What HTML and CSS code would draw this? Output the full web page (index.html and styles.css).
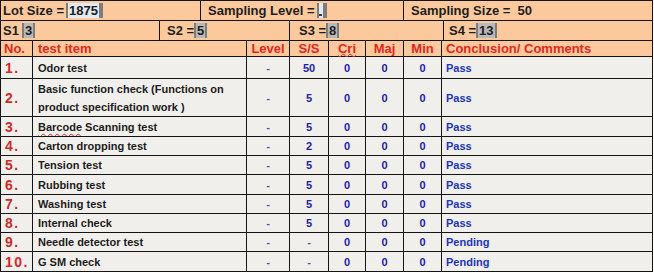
FILE: index.html
```html
<!DOCTYPE html>
<html lang="en">
<head>
<meta charset="utf-8">
<title>Sampling inspection</title>
<link rel="stylesheet" href="styles.css">
</head>
<body>
<div class="sheet">
  <div class="band band-1">
    <div class="cell info pad-a">Lot Size =<span class="fld fld-light">1875</span></div>
    <div class="cell info pad-b">Sampling Level =<span class="fld fld-light fld-empty"><span class="dash"></span></span></div>
    <div class="cell info pad-b">Sampling Size = &nbsp;50</div>
  </div>
  <div class="band band-2">
    <div class="cell info pad-a">S1<span class="fld fld-gap">3</span></div>
    <div class="cell info pad-c">S2 =<span class="fld">5</span></div>
    <div class="cell info pad-d">S3 =<span class="fld">8</span></div>
    <div class="cell info pad-e">S4 =<span class="fld">13</span></div>
  </div>
  <div class="table">
    <div class="cell head num">No.</div>
    <div class="cell head item">test item</div>
    <div class="cell head mid">Level</div>
    <div class="cell head mid">S/S</div>
    <div class="cell head mid"><span class="spell spell-head">Cri</span></div>
    <div class="cell head mid">Maj</div>
    <div class="cell head mid">Min</div>
    <div class="cell head note">Conclusion/ Comments</div>

    <div class="cell data no">1.</div>
    <div class="cell data item">Odor test</div>
    <div class="cell data mid val lvl">-</div>
    <div class="cell data mid val">50</div>
    <div class="cell data mid val">0</div>
    <div class="cell data mid val">0</div>
    <div class="cell data mid val">0</div>
    <div class="cell data note res">Pass</div>

    <div class="cell data no">2.</div>
    <div class="cell data item wrap">Basic function check (Functions on product specification work )</div>
    <div class="cell data mid val lvl">-</div>
    <div class="cell data mid val">5</div>
    <div class="cell data mid val">0</div>
    <div class="cell data mid val">0</div>
    <div class="cell data mid val">0</div>
    <div class="cell data note res">Pass</div>

    <div class="cell data no">3.</div>
    <div class="cell data item"><span class="spell">Barcode</span>&nbsp;Scanning test</div>
    <div class="cell data mid val lvl">-</div>
    <div class="cell data mid val">5</div>
    <div class="cell data mid val">0</div>
    <div class="cell data mid val">0</div>
    <div class="cell data mid val">0</div>
    <div class="cell data note res">Pass</div>

    <div class="cell data no">4.</div>
    <div class="cell data item">Carton dropping test</div>
    <div class="cell data mid val lvl">-</div>
    <div class="cell data mid val">2</div>
    <div class="cell data mid val">0</div>
    <div class="cell data mid val">0</div>
    <div class="cell data mid val">0</div>
    <div class="cell data note res">Pass</div>

    <div class="cell data no">5.</div>
    <div class="cell data item">Tension test</div>
    <div class="cell data mid val lvl">-</div>
    <div class="cell data mid val">5</div>
    <div class="cell data mid val">0</div>
    <div class="cell data mid val">0</div>
    <div class="cell data mid val">0</div>
    <div class="cell data note res">Pass</div>

    <div class="cell data no">6.</div>
    <div class="cell data item">Rubbing test</div>
    <div class="cell data mid val lvl">-</div>
    <div class="cell data mid val">5</div>
    <div class="cell data mid val">0</div>
    <div class="cell data mid val">0</div>
    <div class="cell data mid val">0</div>
    <div class="cell data note res">Pass</div>

    <div class="cell data no">7.</div>
    <div class="cell data item">Washing test</div>
    <div class="cell data mid val lvl">-</div>
    <div class="cell data mid val">5</div>
    <div class="cell data mid val">0</div>
    <div class="cell data mid val">0</div>
    <div class="cell data mid val">0</div>
    <div class="cell data note res">Pass</div>

    <div class="cell data no">8.</div>
    <div class="cell data item">Internal check</div>
    <div class="cell data mid val lvl">-</div>
    <div class="cell data mid val">5</div>
    <div class="cell data mid val">0</div>
    <div class="cell data mid val">0</div>
    <div class="cell data mid val">0</div>
    <div class="cell data note res">Pass</div>

    <div class="cell data no">9.</div>
    <div class="cell data item">Needle detector test</div>
    <div class="cell data mid val lvl">-</div>
    <div class="cell data mid val lvl">-</div>
    <div class="cell data mid val">0</div>
    <div class="cell data mid val">0</div>
    <div class="cell data mid val">0</div>
    <div class="cell data note res">Pending</div>

    <div class="cell data no">10.</div>
    <div class="cell data item">G SM check</div>
    <div class="cell data mid val lvl">-</div>
    <div class="cell data mid val lvl">-</div>
    <div class="cell data mid val">0</div>
    <div class="cell data mid val">0</div>
    <div class="cell data mid val">0</div>
    <div class="cell data note res">Pending</div>
  </div>
</div>
</body>
</html>
```

FILE: styles.css
```css
html, body {
  margin: 0;
  padding: 0;
  background: #ffffff;
}

body {
  font-family: "Liberation Sans", Arial, sans-serif;
}

.sheet {
  width: 653px;
  box-sizing: border-box;
  padding: 1px;
  background: #141414;
  display: flex;
  flex-direction: column;
  gap: 1px;
}

.band {
  display: grid;
  gap: 1px;
  height: 19px;
}

.band-1 {
  grid-template-columns: 199px 202px 248px;
}

.band-2 {
  grid-template-columns: 158px 129px 153px 208px;
}

.table {
  display: grid;
  gap: 1px;
  grid-template-columns: 31px 213px 42px 38px 36px 37px 37px 210px;
  grid-template-rows: 15px 21px 37px 19px 18px 18px 19px 18px 18px 18px 19px;
}

.cell {
  display: flex;
  align-items: center;
  white-space: nowrap;
  overflow: hidden;
}

.info {
  background: #fcc99c;
  color: #1d1d1d;
  font-size: 13px;
  font-weight: bold;
}

.pad-a { padding-left: 2px; }
.pad-b { padding-left: 7px; }
.pad-c { padding-left: 7px; }
.pad-d { padding-left: 9px; }
.pad-e { padding-left: 5px; }

.fld {
  display: inline-block;
  height: 15px;
  line-height: 15px;
  padding: 0 1px;
  background: #b9b9b9;
  color: #202020;
  border-left: 2px solid #7d7d7d;
  border-right: 2px solid #7d7d7d;
  box-sizing: border-box;
}

.fld-gap {
  margin-left: 3px;
}

.fld-light {
  background: #e3e9ef;
  border-right-width: 4px;
  margin-left: 2px;
}

.fld-empty {
  width: 10px;
  position: relative;
}

.dash {
  position: absolute;
  right: 1px;
  bottom: 2px;
  width: 3px;
  height: 2px;
  background: #3a3a3a;
}

.head {
  background: #fcc99c;
  color: #e2261f;
  font-size: 13px;
  font-weight: bold;
  overflow: visible;
}

.data {
  background: #f1efec;
  font-size: 11px;
  font-weight: bold;
  color: #1c1c1c;
}

.num {
  padding-left: 3px;
}

.no {
  padding-left: 4px;
  color: #d22a2a;
  font-size: 14px;
  letter-spacing: 1.5px;
}

.item {
  padding-left: 5px;
}

.wrap {
  white-space: normal;
  line-height: 18px;
}

.mid {
  justify-content: center;
}

.note {
  padding-left: 4px;
}

.val {
  color: #2121a8;
}

.lvl {
  color: #4a5aa8;
}

.res {
  color: #2234c0;
}

.spell {
  text-decoration: underline wavy #e02424;
  text-decoration-thickness: 1px;
  text-underline-offset: 2px;
}

.spell-head {
  text-underline-offset: 0px;
}
```
